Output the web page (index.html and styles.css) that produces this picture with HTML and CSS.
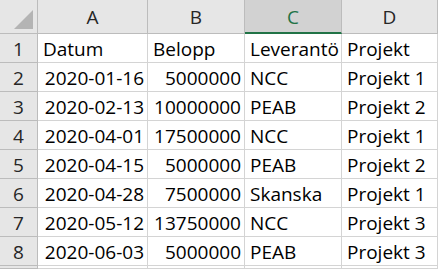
FILE: index.html
```html
<!DOCTYPE html>
<html>
<head>
<meta charset="utf-8">
<link rel="stylesheet" href="styles.css">
</head>
<body>
<div class="sheet">
  <div class="corner"><span class="tri"></span></div>
  <div class="colhead">A</div>
  <div class="colhead">B</div>
  <div class="colhead sel">C</div>
  <div class="colhead">D</div>

  <div class="rowhead">1</div>
  <div class="cell">Datum</div>
  <div class="cell">Belopp</div>
  <div class="cell">Leverantö</div>
  <div class="cell">Projekt</div>

  <div class="rowhead">2</div>
  <div class="cell num">2020-01-16</div>
  <div class="cell num">5000000</div>
  <div class="cell">NCC</div>
  <div class="cell">Projekt 1</div>

  <div class="rowhead">3</div>
  <div class="cell num">2020-02-13</div>
  <div class="cell num">10000000</div>
  <div class="cell">PEAB</div>
  <div class="cell">Projekt 2</div>

  <div class="rowhead">4</div>
  <div class="cell num">2020-04-01</div>
  <div class="cell num">17500000</div>
  <div class="cell">NCC</div>
  <div class="cell">Projekt 1</div>

  <div class="rowhead">5</div>
  <div class="cell num">2020-04-15</div>
  <div class="cell num">5000000</div>
  <div class="cell">PEAB</div>
  <div class="cell">Projekt 2</div>

  <div class="rowhead">6</div>
  <div class="cell num">2020-04-28</div>
  <div class="cell num">7500000</div>
  <div class="cell">Skanska</div>
  <div class="cell">Projekt 1</div>

  <div class="rowhead">7</div>
  <div class="cell num">2020-05-12</div>
  <div class="cell num">13750000</div>
  <div class="cell">NCC</div>
  <div class="cell">Projekt 3</div>

  <div class="rowhead">8</div>
  <div class="cell num">2020-06-03</div>
  <div class="cell num">5000000</div>
  <div class="cell">PEAB</div>
  <div class="cell">Projekt 3</div>

  <div class="rowhead"></div>
  <div class="cell"></div>
  <div class="cell"></div>
  <div class="cell"></div>
  <div class="cell"></div>
</div>
</body>
</html>
```
FILE: styles.css
```css
html, body {
  margin: 0;
  padding: 0;
  background: #ffffff;
  overflow: hidden;
}
.sheet {
  display: grid;
  grid-template-columns: 38px 110px 97px 97px 96px;
  grid-template-rows: 34px repeat(8, 29px) 1fr;
  width: 438px;
  height: 269px;
  overflow: hidden;
  font-family: "Open Sans", "Liberation Sans", sans-serif;
  font-size: 19px;
  color: #000;
}
.corner, .colhead, .rowhead, .cell {
  box-sizing: border-box;
  overflow: hidden;
  white-space: nowrap;
  min-height: 0;
}
.corner {
  background: #e6e6e6;
  border-right: 1px solid #bcbcbc;
  border-bottom: 1px solid #bcbcbc;
  display: flex;
  align-items: flex-end;
  justify-content: flex-end;
  padding: 0 4px 4px 0;
}
.tri {
  width: 0;
  height: 0;
  border-left: 19px solid transparent;
  border-bottom: 19px solid #b4b4b4;
}
.colhead {
  background: #e6e6e6;
  border-right: 1px solid #bcbcbc;
  border-bottom: 1px solid #bcbcbc;
  display: flex;
  align-items: flex-end;
  justify-content: center;
  padding-bottom: 3px;
  color: #262626;
}
.colhead.sel {
  background: #d2d2d2;
  color: #217346;
  border-bottom: 2px solid #217346;
  padding-bottom: 2px;
}
.rowhead {
  background: #e6e6e6;
  border-right: 1px solid #bcbcbc;
  border-bottom: 1px solid #bcbcbc;
  display: flex;
  align-items: flex-end;
  justify-content: center;
  padding-bottom: 0;
  color: #262626;
}
.cell {
  border-right: 1px solid #d4d4d4;
  border-bottom: 1px solid #d4d4d4;
  display: flex;
  align-items: flex-end;
  padding: 0 3px 0 5px;
}
.cell.num {
  justify-content: flex-end;
}
```
